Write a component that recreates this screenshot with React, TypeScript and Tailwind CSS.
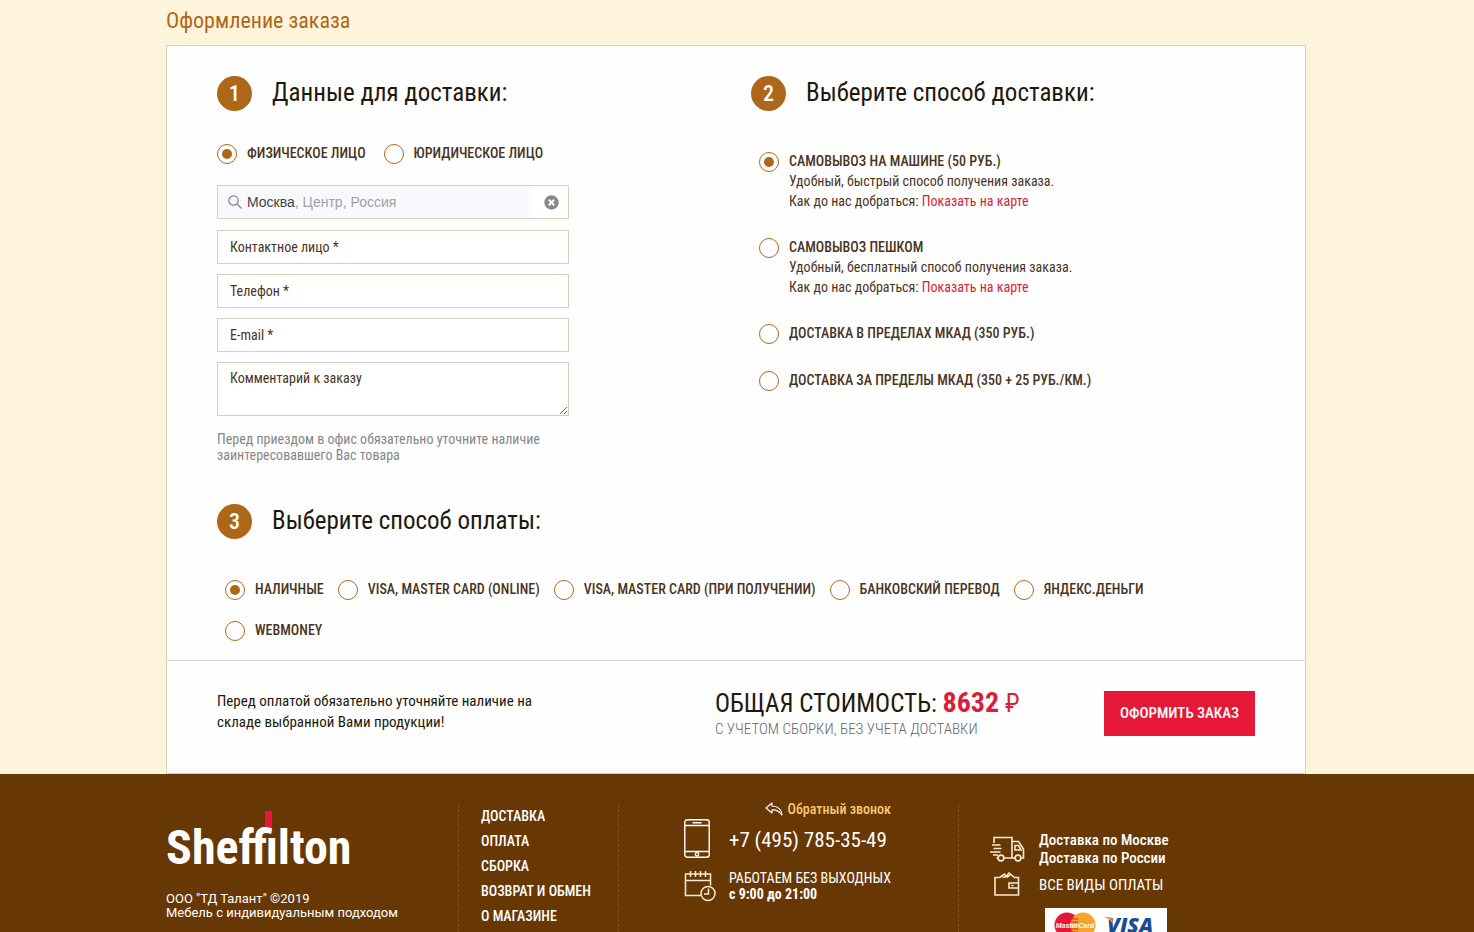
import type { ReactNode } from 'react';

const radioClass =
  'mt-px grid size-5 shrink-0 appearance-none place-content-center rounded-full border border-[#ae6718] bg-white before:block before:size-[10px] before:rounded-full checked:before:bg-[#ae6718]';

const fieldClass =
  'w-full border border-[#d9d0bb] bg-white px-3 text-[14px] text-[#4a351d] placeholder:text-[#4a351d] placeholder:opacity-100 outline-none';

function StepHeading({ number, children }: { number: number; children: ReactNode }) {
  return (
    <div className="flex items-center gap-5">
      <span className="grid size-[35px] shrink-0 place-content-center rounded-full bg-[#ae6718] text-[22px] font-medium leading-none text-white">
        {number}
      </span>
      <h2 className="pb-[2px] text-[25px] leading-8 text-[#21180c]">{children}</h2>
    </div>
  );
}

function Choice({
  id,
  name,
  label,
  checked,
}: {
  id: string;
  name: string;
  label: string;
  checked?: boolean;
}) {
  return (
    <div className="flex items-start gap-[10px]">
      <input type="radio" id={id} name={name} defaultChecked={checked} className={radioClass} />
      <label htmlFor={id} className="text-[14px] font-medium uppercase leading-5 text-[#4a351d]">
        {label}
      </label>
    </div>
  );
}

const deliveries = [
  { id: 'car', label: 'Самовывоз на машине (50 руб.)', note: 'Удобный, быстрый способ получения заказа.' },
  { id: 'walk', label: 'Самовывоз пешком', note: 'Удобный, бесплатный способ получения заказа.' },
  { id: 'mkad', label: 'Доставка в пределах МКАД (350 руб.)' },
  { id: 'far', label: 'Доставка за пределы МКАД (350 + 25 руб./км.)' },
];

const payments = [
  'Наличные',
  'Visa, Master Card (Online)',
  'Visa, Master Card (при получении)',
  'Банковский перевод',
  'Яндекс.Деньги',
  'WebMoney',
];

const footerLinks = ['Доставка', 'Оплата', 'Сборка', 'Возврат и обмен', 'О магазине'];

function PhoneIcon() {
  return (
    <svg width="26" height="39" viewBox="0 0 26 39" fill="none" stroke="#fff" strokeWidth="1.4" aria-hidden="true">
      <rect x="0.8" y="0.8" width="24.4" height="37.4" rx="2.5" />
      <path d="M1 6.500h24M1 32.500h24M8.500 3.700h9" />
      <circle cx="13" cy="35.300" r="1.700" />
    </svg>
  );
}

function CalendarIcon() {
  return (
    <svg width="32" height="32" viewBox="0 0 32 32" fill="none" stroke="#f7ead2" strokeWidth="1.5" aria-hidden="true">
      <path d="M17 25.500H1.500V4h25v11.500M1.500 10.500h25M6.500 1v6M11.500 1v6M16.500 1v6M21.500 1v6" />
      <circle cx="24" cy="23.500" r="7" />
      <path d="M24.500 18.500v5.500H20" />
    </svg>
  );
}

function TruckIcon() {
  return (
    <svg width="35" height="26" viewBox="0 0 35 26" fill="none" stroke="#f7ead2" strokeWidth="1.600" aria-hidden="true">
      <path d="M4 7V1.500h18V22M22 5.500h6.500l5 7.500v9H31M25 22H14M8 22H6.500M25 9.500h3.500l2.500 4.500h-6zM2 9h8.500M3.500 12.500h8M0 16h10.500M3 19h5" />
      <circle cx="11" cy="22" r="2.900" />
      <circle cx="28" cy="22" r="2.900" />
    </svg>
  );
}

function WalletIcon() {
  return (
    <svg width="26" height="24" viewBox="0 0 26 24" fill="none" stroke="#f7ead2" strokeWidth="1.600" aria-hidden="true">
      <path d="M5.500 5.500H1V23h23.500V5.500H21M24.500 11H15v5h9.500M17.500 13.500h2" />
      <path d="M5.500 5.500l5-3.500 2 2.500L15 1l6 5M8.500 5.500l3.500-.8M13 5.500l3-2.500" />
    </svg>
  );
}

export default function App() {
  return (
    <div className="flex min-h-screen flex-col bg-[#fef4dc] font-['Roboto_Condensed','Liberation_Sans_Narrow',Roboto,sans-serif]">
      <main className="w-full pr-[2px]">
        <div className="mx-auto max-w-[1140px]">
          <h1 className="pt-[5px] pb-2 text-[22px] leading-8 text-[#ae6718]">Оформление заказа</h1>
          <form className="border border-[#d9d0bb] bg-[#fefefe]" onSubmit={(e) => e.preventDefault()}>
            <div className="grid grid-cols-2 pt-[30px]">
              <section className="pl-[50px]">
                <StepHeading number={1}>Данные для доставки:</StepHeading>
                <div className="flex gap-[18px] pt-8">
                  <Choice id="person" name="customer" label="Физическое лицо" checked />
                  <Choice id="company" name="customer" label="Юридическое лицо" />
                </div>
                <div className="flex w-[352px] flex-col gap-[10px] pt-[21px]">
                  <div className="mb-px flex h-[34px] items-center border border-[#d9d0bb] bg-linear-to-r from-[#f7f9fc] from-88% to-white to-90% font-['Liberation_Sans',sans-serif] text-[14px] text-[#a0a2a5]">
                    <svg className="mr-[5px] ml-[10px] shrink-0" width="14" height="14" viewBox="0 0 14 14" fill="none" stroke="#85888b" strokeWidth="1.300" aria-hidden="true">
                      <circle cx="5.500" cy="5.500" r="4.700" />
                      <path d="M9 9l4.500 4.500" />
                    </svg>
                    <input aria-label="Город" defaultValue="Москва" className="field-sizing-content bg-transparent text-[#444] outline-none" />
                    <span>, Центр, Россия</span>
                    <button type="button" aria-label="Очистить" className="mr-[9px] ml-auto">
                      <svg width="15" height="15" viewBox="0 0 15 15" aria-hidden="true">
                        <circle cx="7.500" cy="7.500" r="7.200" fill="#85898b" />
                        <path d="M4.800 4.800l5.400 5.400M10.200 4.800l-5.400 5.400" stroke="#fff" strokeWidth="2" />
                      </svg>
                    </button>
                  </div>
                  <input aria-label="Контактное лицо" placeholder="Контактное лицо *" className={`${fieldClass} h-[34px]`} />
                  <input aria-label="Телефон" type="tel" placeholder="Телефон *" className={`${fieldClass} h-[34px]`} />
                  <input aria-label="E-mail" type="email" placeholder="E-mail *" className={`${fieldClass} h-[34px]`} />
                  <textarea aria-label="Комментарий к заказу" placeholder="Комментарий к заказу" className={`${fieldClass} h-[54px] resize py-[5px] leading-5`} />
                </div>
                <p className="w-[352px] pt-[15px] text-[14px] leading-4 text-[#85868a]">
                  Перед приездом в офис обязательно уточните наличие заинтересовавшего Вас товара
                </p>
              </section>
              <section className="pl-[15px]">
                <StepHeading number={2}>Выберите способ доставки:</StepHeading>
                <div className="flex flex-col gap-[26px] pt-10 pl-2">
                  {deliveries.map((d, i) => (
                    <div key={d.id} className="flex items-start gap-[10px] text-[14px] leading-5 text-[#4a351d]">
                      <input type="radio" id={d.id} name="delivery" defaultChecked={i === 0} className={radioClass} />
                      <div>
                        <label htmlFor={d.id} className="block font-medium uppercase">{d.label}</label>
                        {d.note && (
                          <p>
                            {d.note}
                            <br />
                            Как до нас добраться: <a href="#map" className="text-[#d71f3c]">Показать на карте</a>
                          </p>
                        )}
                      </div>
                    </div>
                  ))}
                </div>
              </section>
            </div>
            <section className="px-[50px] pt-[41px] pb-[19px]">
              <StepHeading number={3}>Выберите способ оплаты:</StepHeading>
              <div className="flex flex-wrap gap-x-[14px] gap-y-5 px-2 pt-10">
                {payments.map((p, i) => (
                  <Choice key={p} id={`pay-${i}`} name="payment" label={p} checked={i === 0} />
                ))}
              </div>
            </section>
            <div className="flex items-start border-t border-[#ddd2c6] px-[50px] pt-[30px] pb-[31px]">
              <p className="w-[498px] pr-[150px] text-[15px] leading-[21px] text-[#21180c]">
                Перед оплатой обязательно уточняйте наличие на складе выбранной Вами продукции!
              </p>
              <div>
                <p className="text-[25px] uppercase leading-6 text-[#21180c]">
                  Общая стоимость: <b className="text-[28px] leading-6 font-bold text-[#d71f3c]">8632</b>{' '}
                  <span className="text-[#d71f3c]">₽</span>
                </p>
                <p className="text-[15px] font-light uppercase leading-[26px] text-[#66666c]">с учетом сборки, без учета доставки</p>
              </div>
              <button type="submit" className="ml-auto h-[45px] w-[151px] bg-[#e51937] text-[15px] font-medium uppercase text-white">
                Оформить заказ
              </button>
            </div>
          </form>
        </div>
      </main>
      <footer className="grow bg-[#683804] pr-[2px] text-white">
        <div className="mx-auto flex max-w-[1140px] pt-[30px]">
          <div className="w-[293px] border-r border-dashed border-[#7d5119]">
            <div className="relative w-fit pt-3 text-[48px] font-bold leading-[64px]">
              <span className="absolute top-[7px] left-[99px] h-[22px] w-[7px] bg-[#e51937]" />
              <span className="relative">Sheffilton</span>
            </div>
            <p className="pt-3 font-[Roboto,sans-serif] text-[13px] leading-[14px]">
              ООО "ТД Талант" ©2019
              <br />
              Мебель с индивидуальным подходом
            </p>
          </div>
          <nav className="flex w-[160px] flex-col border-r border-dashed border-[#7d5119] pl-[22px] text-[14px] font-medium uppercase leading-[25px]">
            {footerLinks.map((l) => (
              <a key={l} href="#info">{l}</a>
            ))}
          </nav>
          <div className="w-[340px] border-r border-dashed border-[#7d5119] pl-[65px]">
            <div className="w-fit">
              <a href="#callback" className="flex h-[10px] items-center justify-end gap-[5px] text-[14px] font-medium text-[#fdc678]">
                <svg width="18" height="14" viewBox="0 0 18 14" fill="none" stroke="#fff" strokeWidth="1.100" strokeLinejoin="round" aria-hidden="true">
                  <path d="M7 1L1 6l6 5V8c4-.5 7 1 10 5 0-5-4-9-10-9z" />
                </svg>
                Обратный звонок
              </a>
              <div className="flex items-center pt-[5px]">
                <span className="w-[45px]"><PhoneIcon /></span>
                <a href="tel:+74957853549" className="pt-1 text-[21px]">+7 (495) 785-35-49</a>
              </div>
              <div className="flex items-center pt-[11px]">
                <span className="w-[45px]"><CalendarIcon /></span>
                <p className="pt-px text-[14px] leading-4">
                  РАБОТАЕМ БЕЗ ВЫХОДНЫХ
                  <br />
                  <b>с 9:00 до 21:00</b>
                </p>
              </div>
            </div>
          </div>
          <div className="pt-[27px] pl-[31px] text-[15px] leading-[18px]">
            <div className="flex items-center">
              <span className="w-[49px]"><TruckIcon /></span>
              <p className="font-medium">
                Доставка по Москве
                <br />
                Доставка по России
              </p>
            </div>
            <div className="flex items-center pt-[5px]">
              <span className="w-[49px] pl-1"><WalletIcon /></span>
              <p className="pt-[2px] uppercase">Все виды оплаты</p>
            </div>
            <div className="mt-3 ml-[55px] flex h-[34px] w-[122px] items-center justify-between bg-white px-[9px]">
              <svg width="42" height="26" viewBox="0 0 42 26" role="img" aria-label="MasterCard">
                <circle cx="13" cy="13" r="12.500" fill="#e21a38" />
                <circle cx="29" cy="13" r="12.500" fill="#f4a52a" />
                <path d="M18 7h6M17 10h7M17 17h7M18 20h6" stroke="#e21a38" strokeWidth="1" />
                <text x="21" y="16" fill="#fff" fontFamily="Liberation Sans" fontSize="7" fontWeight="bold" fontStyle="italic" textAnchor="middle">MasterCard</text>
              </svg>
              <svg className="overflow-visible" width="54" height="24" viewBox="0 0 54 24" role="img" aria-label="VISA">
                <text x="3" y="20" fill="#1c4a94" fontFamily="Open Sans" fontSize="21" fontWeight="800" fontStyle="italic">VISA</text>
                <path d="M0 4h7l2 7Q6 6 0 4z" fill="#f4a52a" />
              </svg>
            </div>
          </div>
        </div>
      </footer>
    </div>
  );
}
